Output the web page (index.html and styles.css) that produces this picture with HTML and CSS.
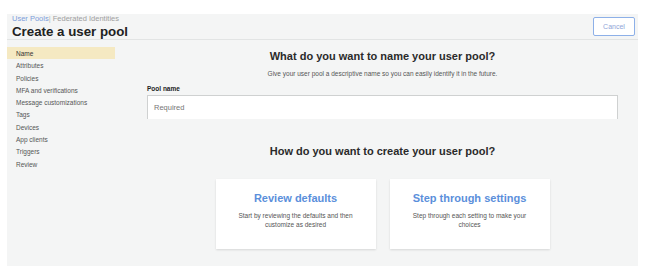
FILE: index.html
```html
<!DOCTYPE html>
<html>
<head>
<meta charset="utf-8">
<link rel="stylesheet" href="styles.css">
</head>
<body>
<div class="frame">
  <header class="header">
    <div class="titles">
      <div class="crumbs"><span class="crumb-active">User Pools</span><span class="crumb-sep">|</span> <span class="crumb">Federated Identities</span></div>
      <h1 class="title">Create a user pool</h1>
    </div>
    <button class="cancel">Cancel</button>
  </header>
  <div class="body">
    <nav class="sidebar">
      <div class="nav-item active">Name</div>
      <div class="nav-item">Attributes</div>
      <div class="nav-item">Policies</div>
      <div class="nav-item">MFA and verifications</div>
      <div class="nav-item">Message customizations</div>
      <div class="nav-item">Tags</div>
      <div class="nav-item">Devices</div>
      <div class="nav-item">App clients</div>
      <div class="nav-item">Triggers</div>
      <div class="nav-item">Review</div>
    </nav>
    <main class="main">
      <h2 class="q">What do you want to name your user pool?</h2>
      <p class="hint">Give your user pool a descriptive name so you can easily identify it in the future.</p>
      <label class="label">Pool name</label>
      <div class="input">Required</div>
      <h2 class="q q2">How do you want to create your user pool?</h2>
      <div class="cards">
        <div class="card">
          <div class="card-title">Review defaults</div>
          <div class="card-text">Start by reviewing the defaults and then customize as desired</div>
        </div>
        <div class="card">
          <div class="card-title">Step through settings</div>
          <div class="card-text">Step through each setting to make your choices</div>
        </div>
      </div>
    </main>
  </div>
</div>
</body>
</html>
```
FILE: styles.css
```css
* { box-sizing: border-box; }
html, body { margin: 0; padding: 0; background: #fff; }
body { font-family: "Liberation Sans", Arial, sans-serif; color: #333; }
.frame {
  margin: 14px 11px 0 7px;
  height: 252px;
  background: #f4f5f5;
  display: flex;
  flex-direction: column;
}
.header {
  height: 26px;
  border-bottom: 1px solid #e2e4e4;
  display: flex;
  justify-content: space-between;
  padding: 0 3px 0 5px;
}
.crumbs { font-size: 7.5px; line-height: 9px; color: #a0a0a0; }
.crumb-active { color: #7c9ddb; }
.crumb-sep { color: #bbb; }
.title { margin: 1px 0 0; font-size: 13.3px; line-height: 15px; font-weight: bold; color: #222; }
.cancel {
  margin-top: 3px;
  width: 42px; height: 19px;
  background: #fff;
  border: 1.5px solid #8db0e8;
  border-radius: 2px;
  color: #8fa6d8;
  font-family: "Liberation Sans", Arial, sans-serif;
  font-size: 7px;
  padding: 0;
}
.body { display: flex; flex: 1; }
.sidebar { width: 108px; padding-top: 7px; }
.nav-item { height: 12.3px; line-height: 13px; padding-left: 9px; font-size: 6.5px; color: #555; }
.nav-item.active { background: #f5e9c2; color: #333; }
.main { flex: 1; padding: 0 20px 0 32px; display: flex; flex-direction: column; }
.q { margin: 10px 0 0; text-align: center; font-size: 11px; line-height: 13px; font-weight: bold; color: #2a2a2a; }
.hint { margin: 7px 0 0; text-align: center; font-size: 6.5px; line-height: 8px; color: #555; }
.label { margin-top: 7px; font-size: 6.5px; line-height: 8px; font-weight: bold; color: #222; }
.input {
  margin-top: 2px;
  height: 24px;
  background: #fff;
  border: 1px solid #cfd1d1;
  border-bottom: none;
  font-size: 7.5px;
  line-height: 23px;
  padding-left: 6px;
  color: #777;
}
.q2 { margin-top: 25.5px; }
.cards { display: flex; justify-content: center; gap: 14px; margin-top: 21.5px; }
.card {
  width: 160px; height: 70px;
  background: #fff;
  box-shadow: 0 1px 2px rgba(0,0,0,0.12);
  text-align: center;
  padding-top: 12.5px;
}
.card-title { font-size: 11px; line-height: 13px; font-weight: bold; color: #5b8fdb; }
.card-text { margin: 6.5px auto 0; width: 124px; font-size: 6.5px; line-height: 9px; color: #555; }
```
